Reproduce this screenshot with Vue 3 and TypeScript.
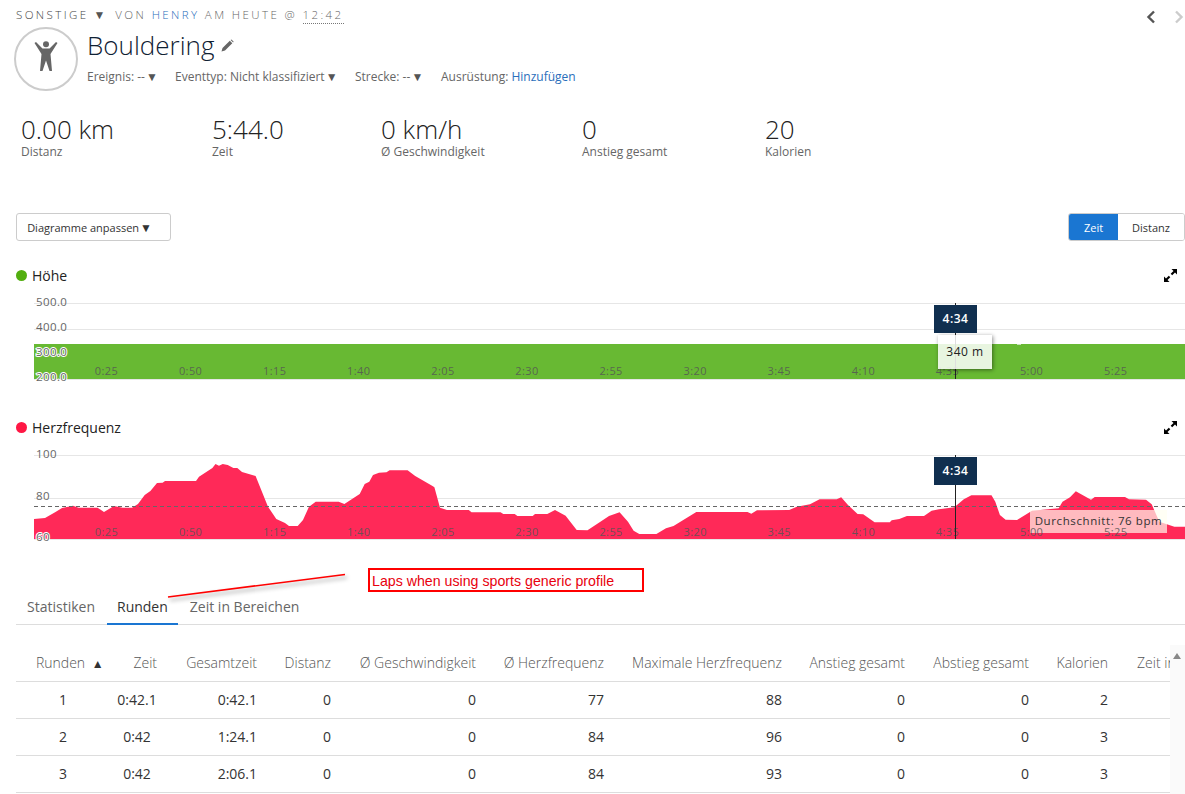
<script setup lang="ts">
const stats = [
  { value: '0.00 km', label: 'Distanz' },
  { value: '5:44.0', label: 'Zeit' },
  { value: '0 km/h', label: 'Ø Geschwindigkeit' },
  { value: '0', label: 'Anstieg gesamt' },
  { value: '20', label: 'Kalorien' }
]

const timeLabels = ['0:25', '0:50', '1:15', '1:40', '2:05', '2:30', '2:55', '3:20', '3:45', '4:10', '4:35', '5:00', '5:25']
const labelX = (i: number) => 106.5 + i * 84.1

// Herzfrequenz-Kurve, Koordinaten wie im Bild
const hrPoints = [
  [34, 519], [45, 518], [55.5, 512], [62, 508], [73, 505.7], [78.5, 507.7], [97.6, 507.7], [104, 512], [114, 506],
  [122.5, 507.7], [132, 507.7], [138, 504], [144.7, 495], [150.4, 491], [157, 483], [162.6, 482.7], [165, 481],
  [196, 481], [199, 476.7], [212.4, 468], [215.5, 464], [219, 465.7], [222.7, 464], [227.7, 465], [233.4, 468],
  [237.3, 468], [242, 472], [248.8, 474], [255.6, 476], [268, 506.7], [276.3, 519], [285, 523], [289, 526],
  [297.7, 526], [303, 520], [309, 506.7], [315.7, 501.7], [338.7, 501.7], [344.4, 504], [359.7, 494], [364.7, 484],
  [369.3, 481.7], [373, 475], [379, 472.7], [386.5, 472.3], [389.6, 470.3], [407.6, 470.3], [415.2, 476], [432.5, 486],
  [434.4, 487.3], [440, 507.7], [447, 510], [468.8, 510], [471.5, 512.3], [500.6, 512.3], [503.3, 514], [514.7, 514],
  [517.4, 516], [532.7, 516], [535, 514], [547.3, 514], [555, 510], [565.6, 515.7], [576.7, 530], [587.5, 530.3],
  [600, 522], [609, 516], [619.6, 512.3], [628, 521.7], [633.6, 530.7], [639.3, 534], [656.4, 534], [666, 528.3],
  [673.5, 526], [696.3, 512], [747.5, 512], [751.3, 513.7], [757, 510.3], [789.2, 510], [796.8, 506.7], [810, 504.3],
  [819.6, 499.3], [836.7, 499.3], [841.2, 497.3], [848, 505], [857.6, 514], [863.2, 514.3], [874.6, 522.3], [889.8, 522.3],
  [891.7, 520.3], [899.3, 519], [906.9, 516], [924, 516], [931.6, 510.7], [939, 509.3], [948.6, 508], [954.3, 507.3],
  [963.8, 499.3], [971.4, 495.3], [991.5, 495.3], [995.3, 501.7], [999.9, 515], [1005.6, 519.7], [1017, 520], [1032, 510.7],
  [1058.7, 508.3], [1062.5, 501.7], [1070, 497.3], [1075.8, 491.3], [1091, 499.7], [1094.7, 497], [1125, 497], [1129, 499.3],
  [1146, 499.7], [1151.7, 504.3], [1159.3, 521.7], [1174.4, 526.7], [1185, 526.7]
]
const hrArea = [[34, 539], ...hrPoints, [1185, 539]].map((p) => p.join(',')).join(' ')

const columns = ['Zeit', 'Gesamtzeit', 'Distanz', 'Ø Geschwindigkeit', 'Ø Herzfrequenz', 'Maximale Herzfrequenz', 'Anstieg gesamt', 'Abstieg gesamt', 'Kalorien']
const rows = [
  { lap: 1, time: '0:42.1', total: '0:42.1', values: [0, 0, 77, 88, 0, 0, 2] },
  { lap: 2, time: '0:42', total: '1:24.1', values: [0, 0, 84, 96, 0, 0, 3] },
  { lap: 3, time: '0:42', total: '2:06.1', values: [0, 0, 84, 93, 0, 0, 3] }
]
</script>

<template>
  <div class="page">
    <div class="eyebrow">
      <span>SONSTIGE</span>
      <span class="eyebrow-arrow">▼</span>
      <span class="eyebrow-meta">VON <span class="owner">HENRY</span> AM HEUTE @ <span class="clock">12:42</span></span>
      <div class="pager">
        <svg width="10" height="14" viewBox="0 0 10 14"><path d="M8 1.5 2.5 7 8 12.5" fill="none" stroke="#555" stroke-width="2.4" /></svg>
        <svg width="10" height="14" viewBox="0 0 10 14"><path d="M2 1.5 7.5 7 2 12.5" fill="none" stroke="#ccc" stroke-width="2.4" /></svg>
      </div>
    </div>

    <div class="head">
      <div class="avatar">
        <svg width="60" height="60" viewBox="2 2 60 60">
          <circle cx="32" cy="17.3" r="3" fill="#666" />
          <path d="M20.5 16 22 15 28.5 21.5H35.5L42 15 43.5 16 36.5 27 38 44H35.5L32 33.5 28.5 44H26L27.5 27Z" fill="#666" />
        </svg>
      </div>
      <div class="head-text">
        <div class="title-row">
          <h1>Bouldering</h1>
          <svg width="13" height="13" viewBox="0 0 13 13"><path d="M0.5 12.5 1.5 9 8.8 1.7 11.3 4.2 4 11.5ZM9.6 0.9 10.4 0.4 12.6 2.6 12.1 3.4Z" fill="#666" /></svg>
        </div>
        <div class="meta">
          <span class="meta-a">Ereignis: -- <i class="caret">▼</i></span>
          <span class="meta-b">Eventtyp: Nicht klassifiziert <i class="caret">▼</i></span>
          <span class="meta-c">Strecke: -- <i class="caret">▼</i></span>
          <span>Ausrüstung: <a class="link">Hinzufügen</a></span>
        </div>
      </div>
    </div>

    <div class="stats">
      <div v-for="s in stats" :key="s.label">
        <div class="stat-value">{{ s.value }}</div>
        <div class="stat-label">{{ s.label }}</div>
      </div>
    </div>

    <div class="toolbar">
      <button class="custom-button">Diagramme anpassen <i class="button-caret">▼</i></button>
      <div class="toggle">
        <button class="toggle-on">Zeit</button>
        <button class="toggle-off">Distanz</button>
      </div>
    </div>

    <div class="chart-head first">
      <span class="dot green"></span>
      <span class="chart-title">Höhe</span>
      <svg class="expand" width="13" height="13" viewBox="0 0 13 13"><path d="M7.5 0H13V5.5L11 3.5 8.2 6.3 6.7 4.8 9.5 2ZM5.5 13H0V7.5L2 9.5 4.8 6.7 6.3 8.2 3.5 11Z" fill="#000" /></svg>
    </div>
    <div class="chart height-chart">
      <svg width="1169" height="90" viewBox="16 295 1169 90">
        <line x1="34" x2="1185" y1="303.5" y2="303.5" class="grid" />
        <line x1="34" x2="1185" y1="329.5" y2="329.5" class="grid" />
        <rect x="34" y="344" width="1151" height="35" fill="#68b933" />
        <rect x="1017" y="344" width="4" height="1" fill="#c9e4b8" />
        <line x1="34" x2="1185" y1="379.5" y2="379.5" class="grid" />
        <text x="36" y="306" class="axis">500.0</text>
        <text x="36" y="331" class="axis">400.0</text>
        <text x="36" y="356" class="axis halo">300.0</text>
        <text x="36" y="381" class="axis halo">200.0</text>
        <text v-for="(t, i) in timeLabels" :key="t" :x="labelX(i)" y="375" class="tick">{{ t }}</text>
        <line x1="955.5" x2="955.5" y1="303" y2="379" stroke="#222" />
      </svg>
      <div class="time-flag">4:34</div>
      <div class="value-tip">340 m</div>
    </div>

    <div class="chart-head second">
      <span class="dot red"></span>
      <span class="chart-title">Herzfrequenz</span>
      <svg class="expand" width="13" height="13" viewBox="0 0 13 13"><path d="M7.5 0H13V5.5L11 3.5 8.2 6.3 6.7 4.8 9.5 2ZM5.5 13H0V7.5L2 9.5 4.8 6.7 6.3 8.2 3.5 11Z" fill="#000" /></svg>
    </div>
    <div class="chart hr-chart">
      <svg width="1169" height="98" viewBox="16 447 1169 98">
        <line x1="34" x2="1185" y1="455.5" y2="455.5" class="grid" />
        <line x1="34" x2="1185" y1="498.5" y2="498.5" class="grid" />
        <polygon :points="hrArea" fill="#ff2958" />
        <line x1="34" x2="1185" y1="539.5" y2="539.5" class="grid" />
        <line x1="34" x2="1185" y1="506.5" y2="506.5" stroke="#666" stroke-dasharray="4 3" />
        <text x="36" y="458" class="axis">100</text>
        <text x="36" y="500" class="axis">80</text>
        <text x="36" y="541" class="axis halo">60</text>
        <rect x="1030" y="510" width="137" height="23" fill="#fffff0" fill-opacity="0.68" />
        <text x="1098.5" y="525" class="avg-text">Durchschnitt: 76 bpm</text>
        <text v-for="(t, i) in timeLabels" :key="t" :x="labelX(i)" y="536" class="tick">{{ t }}</text>
        <line x1="955.5" x2="955.5" y1="455" y2="539" stroke="#222" />
      </svg>
      <div class="time-flag">4:34</div>
    </div>

    <div class="tabs">
      <a class="tab">Statistiken</a>
      <a class="tab active">Runden</a>
      <a class="tab">Zeit in Bereichen</a>
    </div>

    <div class="table-area">
      <div class="table-wrap">
        <table>
          <colgroup>
            <col style="width: 101px" />
            <col style="width: 40px" />
            <col style="width: 100px" />
            <col style="width: 74px" />
            <col style="width: 145px" />
            <col style="width: 128px" />
            <col style="width: 178px" />
            <col style="width: 123px" />
            <col style="width: 124px" />
            <col style="width: 79px" />
            <col style="width: 62px" />
          </colgroup>
          <thead>
            <tr>
              <th class="lap-head">Runden <i class="sort">▲</i></th>
              <th v-for="c in columns" :key="c">{{ c }}</th>
              <th class="last-head">Zeit in Bereichen</th>
            </tr>
          </thead>
          <tbody>
            <tr v-for="r in rows" :key="r.lap">
              <td class="lap-cell">{{ r.lap }}</td>
              <td class="time-cell">{{ r.time }}</td>
              <td>{{ r.total }}</td>
              <td v-for="(v, i) in r.values" :key="i">{{ v }}</td>
              <td></td>
            </tr>
          </tbody>
        </table>
      </div>
      <div class="scrollbar"><i class="scroll-up"></i></div>
    </div>

    <div class="note">Laps when using sports generic profile</div>
    <svg class="note-line" width="200" height="40" viewBox="160 568 200 40">
      <line x1="168" y1="597" x2="345" y2="574.5" stroke="#f00" stroke-width="1.6" />
    </svg>
  </div>
</template>

<style>
html,
body {
  background: #fff;
  overflow: hidden;
}
</style>

<style scoped>
.page {
  position: relative;
  box-sizing: border-box;
  height: 794px;
  padding-left: 16px;
  overflow: hidden;
  font-family: "Open Sans", "Liberation Sans", sans-serif;
  font-size: 12px;
  color: #666;
}

.eyebrow {
  display: flex;
  align-items: center;
  height: 14px;
  padding: 8px 0 5px;
  font-size: 11.5px;
  font-weight: 300;
  letter-spacing: 2.4px;
  color: #444;
  line-height: 14px;
}

.eyebrow-arrow {
  margin-left: 5px;
  font-size: 12px;
  letter-spacing: 0;
  color: #555;
}

.eyebrow-meta {
  margin-left: 10px;
  color: #666;
}

.owner {
  color: #2a6ebb;
}

.clock {
  border-bottom: 1px dotted #777;
  padding-bottom: 1px;
}

.pager {
  display: flex;
  gap: 18px;
  margin-left: auto;
  margin-right: 1px;
  position: relative;
  top: 2px;
}

.head {
  display: flex;
  margin-left: -2px;
  height: 64px;
}

.avatar {
  box-sizing: border-box;
  width: 64px;
  height: 64px;
  border: 2px solid #ccc;
  border-radius: 50%;
  flex-shrink: 0;
}

.avatar svg {
  display: block;
}

.head-text {
  margin-left: 9px;
}

.title-row {
  display: flex;
  align-items: center;
  gap: 7px;
  height: 37px;
}

h1 {
  margin: 0;
  font-size: 26px;
  font-weight: 300;
  color: #0f2133;
  line-height: 37px;
}

.meta {
  display: flex;
  height: 25px;
  line-height: 25px;
  font-size: 12px;
  color: #666;
}

.meta-a {
  width: 88px;
}

.meta-b {
  width: 180px;
}

.meta-c {
  width: 86px;
}

.caret {
  margin-left: -2px;
  font-style: normal;
  font-size: 12px;
  color: #555;
}

.link {
  color: #2a6ebb;
}

.stats {
  display: grid;
  grid-template-columns: 191px 169px 201px 183px auto;
  margin-top: 24px;
  padding-left: 5px;
}

.stat-value {
  font-size: 26px;
  font-weight: 300;
  line-height: 29px;
  color: #222;
}

.stat-label {
  font-size: 12px;
  line-height: 16px;
  color: #666;
}

.toolbar {
  display: flex;
  justify-content: space-between;
  margin-top: 53px;
  height: 28px;
}

button {
  font-family: inherit;
  font-size: 11px;
  color: #333;
  background: #fff;
  cursor: pointer;
}

.custom-button {
  width: 155px;
  height: 28px;
  padding: 0 8px 0 0;
  border: 1px solid #ccc;
  border-radius: 3px;
}

.button-caret {
  font-style: normal;
  font-size: 12px;
  margin-left: -2px;
}

.toggle {
  display: flex;
  width: 117px;
  height: 28px;
  box-sizing: border-box;
  border: 1px solid #ccc;
  border-radius: 3px;
  overflow: hidden;
}

.toggle button {
  border: 0;
  padding: 0;
}

.toggle-on {
  width: 49px;
  background: #1a76d2;
  color: #fff;
}

.toggle-off {
  flex: 1;
}

.chart-head {
  display: flex;
  align-items: center;
  height: 20px;
  padding-right: 8px;
}

.first {
  margin-top: 24px;
}

.second {
  margin-top: 32px;
}

.dot {
  width: 11px;
  height: 11px;
  border-radius: 50%;
}

.green {
  background: #52ae0f;
}

.red {
  background: #ff1744;
}

.chart-title {
  margin-left: 5px;
  font-size: 14px;
  color: #222;
}

.expand {
  margin-left: auto;
}

.chart {
  position: relative;
  margin-top: 10px;
}

.chart svg {
  display: block;
}

.grid {
  stroke: #e6e6e6;
  stroke-width: 1;
}

.axis {
  font-size: 11.5px;
  fill: #666;
  letter-spacing: 0.4px;
}

.halo {
  stroke: #fff;
  stroke-width: 2px;
  paint-order: stroke;
}

.tick {
  font-size: 11px;
  fill: #555;
  letter-spacing: 0.4px;
  text-anchor: middle;
  fill-opacity: 0.85;
}

.avg-text {
  font-size: 11.5px;
  fill: #333;
  letter-spacing: 0.6px;
  text-anchor: middle;
}

.time-flag {
  position: absolute;
  left: 918px;
  top: 10px;
  width: 43px;
  height: 28px;
  background: #102f4f;
  color: #fff;
  font-size: 12px;
  font-weight: 600;
  letter-spacing: 0.5px;
  line-height: 28px;
  text-align: center;
}

.value-tip {
  position: absolute;
  left: 922px;
  top: 40px;
  width: 54px;
  height: 34px;
  background: rgba(255, 255, 255, 0.85);
  box-shadow: 1px 1px 4px rgba(0, 0, 0, 0.45);
  color: #222;
  font-size: 12px;
  letter-spacing: 0.5px;
  line-height: 34px;
  text-align: center;
}

.tabs {
  display: flex;
  gap: 1px;
  height: 34px;
  margin-top: 45px;
  border-bottom: 1px solid #ddd;
  font-size: 14px;
  line-height: 34px;
}

.tab {
  padding: 0 11px;
  color: #666;
}

.tab.active {
  height: 33px;
  padding: 0 10px;
  border-bottom: 2px solid #1a76d2;
  color: #333;
}

.table-area {
  display: flex;
  margin-top: 20px;
}

.table-wrap {
  flex: 1;
  overflow: hidden;
}

table {
  table-layout: fixed;
  width: 1154px;
  border-collapse: collapse;
  font-size: 14px;
  white-space: nowrap;
}

th {
  height: 35px;
  padding: 0 0 1px;
  border-bottom: 1px solid #ddd;
  font-weight: 300;
  text-align: right;
  color: #555;
}

td {
  height: 35px;
  padding: 0 0 1px;
  border-bottom: 1px solid #ddd;
  text-align: right;
  color: #333;
}

.lap-head {
  padding-left: 20px;
  text-align: left;
}

.last-head {
  padding-left: 29px;
  text-align: left;
  overflow: hidden;
}

.sort {
  margin-left: 3px;
  font-style: normal;
  font-size: 12px;
  color: #333;
}

.lap-cell {
  padding-right: 7px;
  text-align: center;
}

.time-cell {
  text-align: center;
}

.scrollbar {
  width: 15px;
  background: #fafafa;
  height: 149px;
}

.scroll-up {
  display: block;
  width: 0;
  height: 0;
  margin: 8px 0 0 3px;
  border-left: 4.5px solid transparent;
  border-right: 4.5px solid transparent;
  border-bottom: 6px solid #888;
}

.note {
  position: absolute;
  left: 368px;
  top: 568px;
  box-sizing: border-box;
  width: 276px;
  height: 24px;
  padding-left: 2px;
  border: 2px solid #f00;
  font-family: "Liberation Sans", Arial, sans-serif;
  font-size: 14.2px;
  line-height: 22px;
  color: #e8000d;
}

.note-line {
  position: absolute;
  left: 160px;
  top: 568px;
  filter: drop-shadow(2px 3px 2px rgba(0, 0, 0, 0.4));
}
</style>
